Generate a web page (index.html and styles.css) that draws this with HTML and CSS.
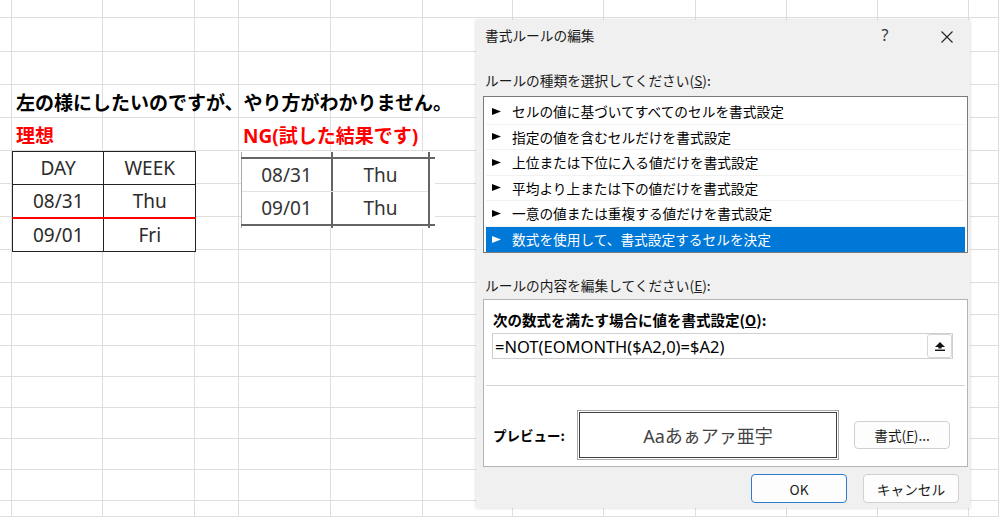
FILE: index.html
```html
<!DOCTYPE html>
<html lang="ja">

<head>
	<meta charset="UTF-8">
	<meta name="viewport" content="width=device-width, initial-scale=1.0">
	<title>書式ルールの編集</title>
	<link rel="stylesheet" href="styles.css">
</head>

<body>
	<div class="sheet">
		<!-- sheet gridlines -->
		<div class="gridlines-v">
			<span></span><span></span><span></span><span></span><span></span><span></span><span></span>
			<span></span><span></span><span></span><span></span><span></span><span></span>
		</div>
		<div class="gridlines-h">
			<span></span><span></span><span></span><span></span><span></span><span></span><span></span><span></span><span></span>
			<span></span><span></span><span></span><span></span><span></span><span></span><span></span><span></span>
		</div>

		<div class="cell-text question">左の様にしたいのですが、やり方がわかりません。</div>
		<div class="cell-text note ideal-title">理想</div>
		<div class="cell-text note ng-title">NG(試した結果です)</div>

		<table class="ideal-table">
			<tr><td>DAY</td><td>WEEK</td></tr>
			<tr class="month-end"><td>08/31</td><td>Thu</td></tr>
			<tr><td>09/01</td><td>Fri</td></tr>
		</table>

		<div class="ng-table">
			<span class="line v-left"></span>
			<span class="line v-mid"></span>
			<span class="line v-right"></span>
			<span class="line h-top"></span>
			<span class="line h-mid"></span>
			<span class="line h-bottom"></span>
			<span class="ng-cell r1 c1">08/31</span>
			<span class="ng-cell r1 c2">Thu</span>
			<span class="ng-cell r2 c1">09/01</span>
			<span class="ng-cell r2 c2">Thu</span>
		</div>
	</div>

	<div class="dialog">
		<div class="dialog-title">
			<span class="caption">書式ルールの編集</span>
			<span class="help">?</span>
			<span class="close">
				<svg width="12" height="12" viewBox="0 0 12 12"><path d="M0.5 0.5 L11.5 11.5 M11.5 0.5 L0.5 11.5" stroke="#222" stroke-width="1.1" fill="none"/></svg>
			</span>
		</div>

		<div class="dialog-label">ルールの種類を選択してください(<u>S</u>):</div>
		<ul class="rule-types">
			<li><svg class="pointer" width="9" height="7" viewBox="0 0 9 7"><path d="M0 0 L9 3.5 L0 7 Z"/></svg>セルの値に基づいてすべてのセルを書式設定</li>
			<li><svg class="pointer" width="9" height="7" viewBox="0 0 9 7"><path d="M0 0 L9 3.5 L0 7 Z"/></svg>指定の値を含むセルだけを書式設定</li>
			<li><svg class="pointer" width="9" height="7" viewBox="0 0 9 7"><path d="M0 0 L9 3.5 L0 7 Z"/></svg>上位または下位に入る値だけを書式設定</li>
			<li><svg class="pointer" width="9" height="7" viewBox="0 0 9 7"><path d="M0 0 L9 3.5 L0 7 Z"/></svg>平均より上または下の値だけを書式設定</li>
			<li><svg class="pointer" width="9" height="7" viewBox="0 0 9 7"><path d="M0 0 L9 3.5 L0 7 Z"/></svg>一意の値または重複する値だけを書式設定</li>
			<li class="selected"><svg class="pointer" width="9" height="7" viewBox="0 0 9 7"><path d="M0 0 L9 3.5 L0 7 Z"/></svg>数式を使用して、書式設定するセルを決定</li>
		</ul>

		<div class="dialog-label second">ルールの内容を編集してください(<u>E</u>):</div>
		<div class="rule-editor">
			<div class="formula-label">次の数式を満たす場合に値を書式設定(<u>O</u>):</div>
			<div class="formula-input">
				<span class="formula-text">=NOT(EOMONTH($A2,0)=$A2)</span>
				<span class="collapse-btn">
					<svg width="10" height="9" viewBox="0 0 10 9"><path d="M5 0 L10 5 H6.6 V6.6 H3.4 V5 H0 Z" fill="#111"/><rect x="0" y="7.6" width="10" height="1.4" fill="#111"/></svg>
				</span>
			</div>
			<div class="editor-sep"></div>
			<div class="preview-row">
				<span class="preview-label">プレビュー:</span>
				<div class="preview-box">Aaあぁアァ亜宇</div>
				<button class="btn format-btn">書式(<u>F</u>)...</button>
			</div>
		</div>

		<div class="dialog-buttons">
			<button class="btn default">OK</button>
			<button class="btn">キャンセル</button>
		</div>
	</div>
</body>

</html>
```

FILE: styles.css
```css
:root {
	--cols: 12px 91px 92px 44px 92px 92px 90px 91px 92px 91px 91px 91px 30px;
	--rows: 18px 34px 33px 33px 33px 33px 33px 33px 33px 32px 31px 31px 31px 31px 31px 31px 16px;
	--grid-line: #dedede;
}

body {
	margin: 0;
	width: 999px;
	height: 517px;
	overflow: hidden;
	position: relative;
	background: #fff;
	font-family: "Noto Sans", "Noto Sans CJK JP", sans-serif;
}

/* spreadsheet */
.sheet {
	display: grid;
	grid-template-columns: var(--cols);
	grid-template-rows: var(--rows);
	width: 999px;
	height: 517px;
}

.gridlines-v {
	grid-row: 1 / -1;
	grid-column: 1 / -1;
	display: grid;
	grid-template-columns: var(--cols);
}

.gridlines-v span {
	border-right: 1px solid var(--grid-line);
}

.gridlines-h {
	grid-row: 1 / -1;
	grid-column: 1 / -1;
	display: grid;
	grid-template-rows: var(--rows);
}

.gridlines-h span {
	border-bottom: 1px solid var(--grid-line);
}

.cell-text {
	display: flex;
	align-items: center;
	padding-left: 4px;
	white-space: nowrap;
	font-family: "Noto Sans CJK JP", sans-serif;
	font-size: 19px;
	font-weight: bold;
	color: #000;
}

.question {
	grid-row: 4;
	grid-column: 2 / 8;
}

.note {
	color: #ff0000;
}

.ideal-title {
	grid-row: 5;
	grid-column: 2;
}

.ng-title {
	grid-row: 5;
	grid-column: 5 / 8;
	font-family: "Noto Sans", "Noto Sans CJK JP", sans-serif;
}

.ideal-table {
	grid-row: 6 / 9;
	grid-column: 2 / 4;
	align-self: start;
	width: 184px;
	border-collapse: collapse;
	background: #fff;
}

.ideal-table td {
	height: 32px;
	padding: 0;
	border: 1px solid #222;
	text-align: center;
	font-size: 19px;
	color: #2b2b2b;
}

.ideal-table .month-end td {
	border-bottom: 2px solid #ff0000;
}

.ng-table {
	grid-row: 6 / 9;
	grid-column: 5 / 8;
	align-self: start;
	justify-self: start;
	margin: 1px 0 0 2px;
	width: 194px;
	height: 76px;
	background: #fff;
	display: grid;
	grid-template-columns: 1px 89px 2px 95px 2px 5px;
	grid-template-rows: 5px 2px 32px 1px 32px 2px 2px;
}

.ng-table .line {
	background: #656565;
}

.ng-table .v-left {
	grid-row: 1 / -1;
	grid-column: 1;
	background: #a8a8a8;
}

.ng-table .v-mid {
	grid-row: 1 / -1;
	grid-column: 3;
}

.ng-table .v-right {
	grid-row: 1 / -1;
	grid-column: 5;
}

.ng-table .h-top {
	grid-row: 2;
	grid-column: 1 / -1;
}

.ng-table .h-mid {
	grid-row: 4;
	grid-column: 2 / 5;
	background: #e2e2e2;
}

.ng-table .h-bottom {
	grid-row: 6;
	grid-column: 1 / -1;
}

.ng-cell {
	display: flex;
	align-items: center;
	justify-content: center;
	font-size: 19px;
	color: #333;
}

.ng-cell.r1 { grid-row: 3; }
.ng-cell.r2 { grid-row: 5; }
.ng-cell.c1 { grid-column: 2; }
.ng-cell.c2 { grid-column: 4; }

/* dialog */
.dialog {
	position: absolute;
	top: 20px;
	left: 476px;
	width: 494px;
	height: 488px;
	box-sizing: border-box;
	padding-left: 7px;
	background: #f0f0f0;
	box-shadow: 0 0 3px rgba(0, 0, 0, 0.18);
	font-family: "Noto Sans CJK JP", sans-serif;
	font-size: 13.7px;
	color: #1a1a1a;
}

.dialog-title {
	display: flex;
	align-items: center;
	height: 30px;
}

.dialog-title .caption {
	flex: 1;
	margin-left: 2px;
}

.dialog-title .help {
	width: 40px;
	text-align: center;
	font-family: "Noto Sans", sans-serif;
	font-size: 16px;
	color: #333;
}

.dialog-title .close {
	width: 46px;
	margin-left: 19px;
	display: flex;
	justify-content: center;
	padding-top: 3px;
}

.dialog-label {
	margin-top: 20px;
	padding-left: 2px;
	line-height: 20px;
	height: 20px;
}

.dialog-label.second {
	margin-top: 22px;
}

.rule-types {
	list-style: none;
	margin: 6px 2px 0 0;
	padding: 2px 2px 0;
	height: 157px;
	box-sizing: border-box;
	border: 1px solid #7a7a7a;
	background: #fff;
}

.rule-types li {
	display: flex;
	align-items: center;
	gap: 11px;
	height: 25.5px;
	padding-left: 6px;
	box-sizing: border-box;
	border-bottom: 1px solid #f2f2f2;
	color: #000;
}

.rule-types .pointer {
	fill: currentColor;
}

.rule-types li.selected {
	background: #0078d7;
	color: #fff;
	border-bottom: none;
}

.rule-editor {
	margin: 4px 2px 0 0;
	height: 168px;
	box-sizing: border-box;
	border: 1px solid #b4b4b4;
	background: #fff;
	padding-top: 10px;
}

.formula-label {
	padding-left: 9px;
	line-height: 20px;
	height: 20px;
	font-weight: bold;
	font-size: 14.5px;
	color: #000;
}

.formula-input {
	display: flex;
	align-items: center;
	margin: 3px 0 0 8px;
	width: 461px;
	height: 26px;
	box-sizing: border-box;
	padding-left: 2px;
	border: 1px solid #cfcfcf;
	background: #fff;
}

.formula-text {
	flex: 1;
	font-family: "Noto Sans", sans-serif;
	font-size: 16.5px;
	color: #000;
}

.collapse-btn {
	display: flex;
	align-items: center;
	justify-content: center;
	width: 25px;
	height: 24px;
	box-sizing: border-box;
	border: 1px solid #d6d6d6;
	border-radius: 3px;
	background: #fdfdfd;
}

.editor-sep {
	height: 1px;
	margin: 26px 2px 0;
	background: #d4d4d4;
}

.preview-row {
	display: flex;
	align-items: center;
	margin-top: 24px;
	padding-left: 9px;
	height: 50px;
}

.preview-label {
	width: 84px;
	font-weight: bold;
	font-size: 13.5px;
	color: #000;
}

.preview-box {
	display: flex;
	align-items: center;
	justify-content: center;
	width: 262px;
	height: 50px;
	box-sizing: border-box;
	border: 1px solid #a9a9a9;
	box-shadow: inset 0 0 0 1px #fff, inset 0 0 0 2px #404040;
	background: #fff;
	font-family: "Noto Sans", "Noto Sans CJK JP", sans-serif;
	font-size: 18px;
	color: #444;
}

.btn {
	width: 96px;
	height: 29px;
	padding: 0;
	box-sizing: border-box;
	border: 1px solid #d0d0d0;
	border-radius: 4px;
	background: #fdfdfd;
	font: inherit;
	color: #1a1a1a;
}

.format-btn {
	height: 28px;
	margin-left: 15px;
}

.btn.default {
	border-color: #2b7bd0;
}

.dialog-buttons {
	display: flex;
	justify-content: flex-end;
	gap: 16px;
	margin-top: 7px;
	padding-right: 11px;
}
```
